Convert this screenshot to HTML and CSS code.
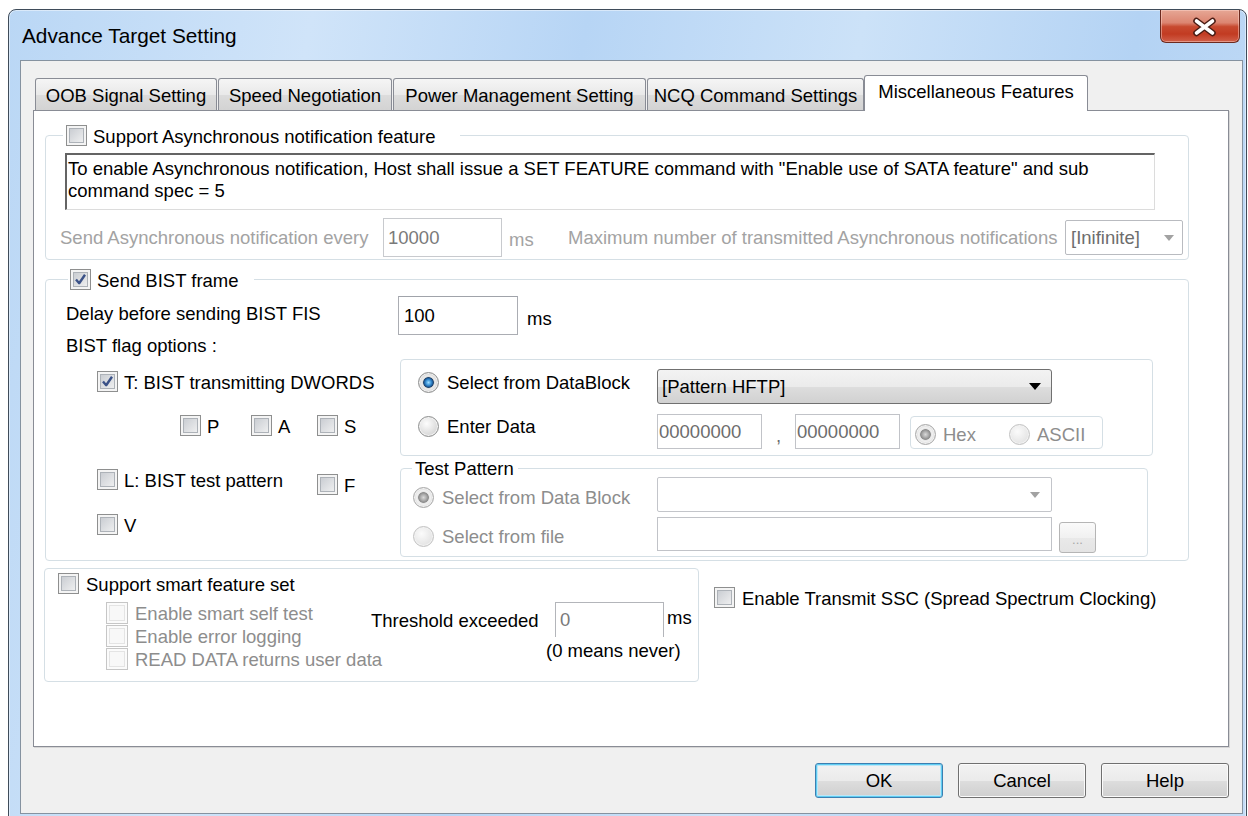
FILE: index.html
```html
<!DOCTYPE html>
<html lang="en">
<head>
<meta charset="utf-8">
<title>Advance Target Setting</title>
<link rel="stylesheet" href="styles.css">
</head>
<body>
<div class="window">
  <div class="titlebar">
    <span class="title">Advance Target Setting</span>
    <button class="close" type="button" aria-label="Close">
      <svg width="80" height="33" viewBox="0 0 80 33">
        <path d="M35.5 11 L51.5 23 M51.5 11 L35.5 23" stroke="#4a1c14" stroke-width="6.5" stroke-linecap="round" fill="none"/>
        <path d="M35.5 11 L51.5 23 M51.5 11 L35.5 23" stroke="#ffffff" stroke-width="3.6" stroke-linecap="round" fill="none"/>
      </svg>
    </button>
  </div>

  <div class="client">
    <div class="tabctl">
      <div class="tabstrip">
        <div class="tab t-oob">OOB Signal Setting</div>
        <div class="tab t-speed">Speed Negotiation</div>
        <div class="tab t-power">Power Management Setting</div>
        <div class="tab t-ncq">NCQ Command Settings</div>
        <div class="tab t-misc active">Miscellaneous Features</div>
      </div>

      <div class="panel">
        <fieldset class="group g-async">
          <legend class="chk"><span class="cb"></span><span>Support Asynchronous notification feature</span></legend>
          <div class="note">To enable Asynchronous notification, Host shall issue a SET FEATURE command with "Enable use of SATA feature" and sub<br>command spec = 5</div>
          <div class="async-row">
            <span class="lbl-every">Send Asynchronous notification every</span>
            <span class="edit e-every">10000</span>
            <span class="unit-every">ms</span>
            <span class="lbl-max">Maximum number of transmitted Asynchronous notifications</span>
            <span class="combo combo-off combo-inf">[Inifinite]<i class="arrow"></i></span>
          </div>
        </fieldset>

        <fieldset class="group g-bist">
          <legend class="chk"><span class="cb"><svg class="tick" viewBox="0 0 19 19"><path d="M5 9.5 L8.2 13.2 L14 4.8"/></svg></span><span>Send BIST frame</span></legend>
          <div class="delay-row">
            <span class="lbl-delay">Delay before sending BIST FIS</span>
            <span class="edit e-delay">100</span>
            <span class="unit-delay">ms</span>
          </div>
          <div class="flag-title">BIST flag options :</div>

          <div class="flags">
            <div class="flag-left">
              <div class="chk row-t"><span class="cb"><svg class="tick" viewBox="0 0 19 19"><path d="M5 9.5 L8.2 13.2 L14 4.8"/></svg></span><span>T: BIST transmitting DWORDS</span></div>
              <div class="row-pas">
                <div class="chk pas-p"><span class="cb"></span><span>P</span></div>
                <div class="chk pas-a"><span class="cb"></span><span>A</span></div>
                <div class="chk"><span class="cb"></span><span>S</span></div>
              </div>
              <div class="row-lf">
                <div class="chk lf-l"><span class="cb"></span><span>L: BIST test pattern</span></div>
                <div class="chk lf-f"><span class="cb"></span><span>F</span></div>
              </div>
              <div class="chk row-v"><span class="cb"></span><span>V</span></div>
            </div>

            <div class="flag-right">
              <div class="datablk">
                <div class="db-row">
                  <div class="opt opt-db db1"><span class="rb on"></span><span>Select from DataBlock</span></div>
                  <span class="combo combo-pat">[Pattern HFTP]<i class="arrow"></i></span>
                </div>
                <div class="db-row">
                  <div class="opt opt-db db2"><span class="rb"></span><span>Enter Data</span></div>
                  <span class="edit e-hex">00000000</span>
                  <span class="comma">,</span>
                  <span class="edit e-hex">00000000</span>
                  <div class="hexgrp">
                    <div class="opt opt-hex off"><span class="rb off on"></span><span>Hex</span></div>
                    <div class="opt off"><span class="rb off"></span><span>ASCII</span></div>
                  </div>
                </div>
              </div>

              <fieldset class="group g-test">
                <legend>Test Pattern</legend>
                <div class="tp-row tp-row1">
                  <div class="opt opt-tp off"><span class="rb off on"></span><span>Select from Data Block</span></div>
                  <span class="combo combo-off combo-tp"><i class="arrow"></i></span>
                </div>
                <div class="tp-row tp-row2">
                  <div class="opt opt-tp off"><span class="rb off"></span><span>Select from file</span></div>
                  <span class="edit e-file"></span>
                  <span class="browse">...</span>
                </div>
              </fieldset>
            </div>
          </div>
        </fieldset>

        <div class="bottom">
          <div class="smart">
            <div class="chk smart-head"><span class="cb"></span><span>Support smart feature set</span></div>
            <div class="smart-body">
              <div class="smart-list">
                <div class="sub"><span class="cb off"></span><span>Enable smart self test</span></div>
                <div class="sub"><span class="cb off"></span><span>Enable error logging</span></div>
                <div class="sub"><span class="cb off"></span><span>READ DATA returns user data</span></div>
              </div>
              <div class="thr">
                <div class="thr-row">
                  <span class="thr-lbl">Threshold exceeded</span>
                  <span class="edit e-thr">0</span>
                  <span class="thr-unit">ms</span>
                </div>
                <div class="thr-note">(0 means never)</div>
              </div>
            </div>
          </div>
          <div class="chk ssc"><span class="cb"></span><span>Enable Transmit SSC (Spread Spectrum Clocking)</span></div>
        </div>
      </div>
    </div>

    <div class="buttons">
      <button class="btn btn-ok" type="button">OK</button>
      <button class="btn" type="button">Cancel</button>
      <button class="btn" type="button">Help</button>
    </div>
  </div>
</div>
</body>
</html>
```

FILE: styles.css
```css
* { box-sizing: border-box; }

html, body { margin: 0; padding: 0; }

body {
  width: 1248px;
  height: 816px;
  overflow: hidden;
  background: #ffffff;
  font-family: "Liberation Sans", Arial, sans-serif;
  font-size: 18.5px;
  color: #000;
}

/* ---------- window frame ---------- */
.window {
  margin: 9px 0 0 8px;
  width: 1239px;
  height: 820px;
  border: 1px solid #3f4c5a;
  border-radius: 8px 8px 0 0;
  padding: 0 3px 0 11px;
  background: linear-gradient(100deg, #bad7f5 0%, #d0e4f9 22%, #b7d5f5 42%, #cce2f8 62%, #b4d3f4 82%, #c4dcf6 100%);
  box-shadow: inset 0 0 0 1px rgba(255, 255, 255, 0.45);
}

.titlebar {
  height: 50px;
  display: flex;
  align-items: flex-start;
}

.title {
  margin: 14px 0 0 2px;
  font-size: 20.8px;
  line-height: 24px;
  color: #000;
}

.close {
  margin-left: auto;
  margin-right: 3px;
  width: 80px;
  height: 33px;
  padding: 0;
  border: 1px solid #6c2a1f;
  border-top: none;
  border-radius: 0 0 6px 6px;
  background: linear-gradient(#e6a795 0%, #dc8571 40%, #c84a30 52%, #c23b22 75%, #d1604a 100%);
  box-shadow: inset 0 0 0 1px rgba(255, 220, 210, 0.45);
  display: block;
}

.close svg { display: block; }

.client {
  width: 1223px;
  height: 754px;
  border: 1px solid #8592a0;
  background: #f0f0f0;
}

/* ---------- tab control ---------- */
.tabctl { margin: 14px 13px 0 12px; }

.tabstrip {
  display: flex;
  align-items: flex-end;
  height: 35px;
  padding-left: 2px;
}

.tab {
  height: 32px;
  padding-top: 2px;
  border: 1px solid #898c95;
  border-bottom: none;
  border-radius: 3px 3px 0 0;
  background: linear-gradient(#f5f5f5, #e9e9e9 50%, #dcdcdc 52%, #d3d3d3);
  display: flex;
  align-items: center;
  justify-content: center;
  white-space: nowrap;
}

.t-oob { width: 182px; }
.t-speed { width: 174px; margin-left: 1px; }
.t-power { width: 253px; margin-left: 1px; }
.t-ncq { width: 217px; margin-left: 1px; }

.tab.active {
  width: 224px;
  height: 36px;
  margin-bottom: -1px;
  padding: 0 0 4px;
  background: #ffffff;
  position: relative;
  z-index: 1;
}

.panel {
  height: 637px;
  border: 1px solid #898c95;
  background: #ffffff;
  box-shadow: 1px 1px 0 #d6d6d6;
}

/* ---------- shared controls ---------- */
.group {
  margin: 0;
  padding: 0;
  min-width: 0;
  border: 1px solid #d5dfe5;
  border-radius: 4px;
}

.chk {
  display: flex;
  align-items: center;
  gap: 6px;
  height: 21px;
  white-space: nowrap;
}

.chk > span + span,
.sub > span + span { padding-top: 3px; }

.cb {
  flex: none;
  width: 21px;
  height: 21px;
  border: 1px solid #8e8f8f;
  background: linear-gradient(135deg, #c2c6cc, #f6f6f6);
  box-shadow: inset 0 0 0 2px #f4f4f4, inset 0 0 0 3px #adb2b8;
}

.cb .tick { display: block; width: 19px; height: 19px; }
.cb .tick path { fill: none; stroke: #3b5288; stroke-width: 2.4; stroke-linejoin: round; }

.cb.off {
  width: 22px;
  height: 22px;
  border-color: #c6c6c6;
  background: #f8f8f8;
  box-shadow: inset 0 0 0 2px #fbfbfb, inset 0 0 0 3px #e4e4e4;
}

.rb {
  flex: none;
  width: 21px;
  height: 21px;
  border-radius: 50%;
  border: 1px solid #8e8f8f;
  background: radial-gradient(circle at 40% 35%, #fdfdfd, #d8d8d8 70%, #c6c6c6);
  box-shadow: inset 0 0 0 1px #f2f2f2;
}

.rb.on {
  background: radial-gradient(circle closest-side, #9fdcff 0%, #3b93d6 28%, #1c5896 46%, #173d66 52%, #d6d6d6 60%, #ededed 70%, #cccccc 100%);
}

.rb.off {
  border-color: #c2c2c2;
  background: radial-gradient(circle at 40% 35%, #fbfbfb, #e3e3e3 75%, #dadada);
}

.rb.off.on {
  border-color: #a9a9a9;
  background: radial-gradient(circle closest-side, #dadada 0%, #acacac 32%, #8e8e8e 50%, #8a8a8a 52%, #e4e4e4 60%, #f2f2f2 72%, #d6d6d6 100%);
}

.opt {
  display: flex;
  align-items: center;
  gap: 8px;
  white-space: nowrap;
}

.opt > span + span { padding-top: 1px; }

.opt.off { color: #8d8d8d; }

.edit {
  flex: none;
  height: 39px;
  border: 1px solid #abadb3;
  border-top-color: #a0a3aa;
  background: #ffffff;
  display: flex;
  align-items: center;
  white-space: nowrap;
}

.combo {
  flex: none;
  display: flex;
  align-items: center;
  padding-left: 4px;
  border: 1px solid #707070;
  border-radius: 3px;
  background: linear-gradient(#f3f3f3, #ebebeb 50%, #dddddd 52%, #d1d1d1);
  white-space: nowrap;
}

.combo-off {
  border-color: #c3c5ca;
  border-radius: 2px;
  background: #ffffff;
  color: #6d6d6d;
}

.arrow {
  margin-left: auto;
  margin-right: 10px;
  width: 0;
  height: 0;
  border-left: 6px solid transparent;
  border-right: 6px solid transparent;
  border-top: 7px solid #000;
}

.combo-off .arrow {
  border-top-color: #a2a2a2;
  border-left-width: 5px;
  border-right-width: 5px;
  border-top-width: 6px;
}

/* ---------- asynchronous notification group ---------- */
.g-async {
  margin: 13px 0 0 11px;
  width: 1144px;
  padding-bottom: 2px;
}

.g-async > legend {
  margin-left: 17px;
  padding: 0 25px 0 3px;
  height: 22px;
}

.note {
  margin: 7px 0 0 19px;
  width: 1090px;
  height: 57px;
  padding: 3px 0 0 1px;
  background: #ffffff;
  border: 1px solid #dcdcdc;
  border-top: 2px solid #646464;
  border-left: 2px solid #646464;
  line-height: 22px;
  white-space: nowrap;
}

.async-row {
  display: flex;
  align-items: center;
  height: 39px;
  margin-top: 8px;
  padding-left: 14px;
  color: #a3a3a3;
  white-space: nowrap;
}

.lbl-every { width: 323px; }

.e-every {
  width: 119px;
  padding-left: 4px;
  border-color: #c8cace;
  color: #7a7a7a;
}

.unit-every { width: 66px; padding-left: 7px; margin-top: 5px; }
.lbl-max { width: 497px; }

.combo-inf {
  width: 118px;
  height: 35px;
  padding-left: 5px;
  border-color: #b9bbc0;
}

.combo-inf .arrow { margin-right: 8px; }

/* ---------- BIST group ---------- */
.g-bist {
  margin: 8px 0 0 11px;
  width: 1144px;
  padding-bottom: 3px;
}

.g-bist > legend {
  margin-left: 22px;
  padding: 0 15px 0 2px;
  height: 22px;
}

.delay-row {
  display: flex;
  align-items: center;
  height: 39px;
  margin-top: 6px;
  padding-left: 20px;
  white-space: nowrap;
}

.lbl-delay { width: 332px; margin-top: -4px; }
.e-delay { width: 120px; padding-left: 5px; }
.unit-delay { margin: 7px 0 0 9px; }

.flag-title {
  padding-left: 20px;
  line-height: 22px;
}

.flags {
  display: grid;
  grid-template-columns: 354px 753px;
}

.flag-left { padding-left: 51px; }

.row-t { margin-top: 14px; }

.row-pas {
  display: flex;
  margin-top: 23px;
  padding-left: 83px;
}

.pas-p { width: 71px; }
.pas-a { width: 66px; }

.row-lf {
  display: flex;
  align-items: flex-start;
  margin-top: 33px;
}

.lf-l { width: 220px; }
.lf-f { margin-top: 5px; }
.row-v { margin-top: 19px; }

.datablk {
  margin-top: 2px;
  width: 753px;
  border: 1px solid #d5dfe5;
  border-radius: 4px;
  padding: 9px 0 6px 17px;
}

.db-row {
  display: flex;
  align-items: center;
  height: 35px;
}

.db-row + .db-row { margin-top: 10px; }

.opt-db { width: 239px; align-self: flex-start; }
.db1 { margin-top: 2px; }
.db2 { margin-top: 1px; }

.combo-pat { width: 395px; height: 35px; }

.e-hex {
  width: 105px;
  height: 35px;
  padding-left: 1px;
  color: #6d6d6d;
  border-color: #c1c3c8;
}

.comma {
  width: 33px;
  text-align: center;
  margin-top: 8px;
  color: #6d6d6d;
}

.hexgrp {
  align-self: flex-end;
  margin-left: 10px;
  width: 193px;
  height: 33px;
  border: 1px solid #d5dfe5;
  border-radius: 4px;
  display: flex;
  align-items: center;
  padding: 3px 0 0 4px;
}

.opt-hex { width: 94px; }
.hexgrp .opt { gap: 7px; }

.g-test {
  margin-top: 2px;
  width: 748px;
  padding-bottom: 5px;
}

.g-test > legend {
  margin-left: 11px;
  padding: 0 4px 0 3px;
  height: 20px;
  line-height: 22px;
}

.tp-row {
  display: flex;
  align-items: center;
  padding-left: 12px;
}

.tp-row1 { margin-top: -1px; height: 35px; }
.tp-row2 { margin-top: 5px; height: 34px; }

.opt-tp { width: 244px; padding-top: 5px; }
.tp-row2 .opt-tp { padding-top: 4px; }

.combo-tp { width: 395px; height: 35px; }
.combo-tp .arrow { margin-right: 11px; }

.e-file {
  width: 395px;
  height: 34px;
  border-color: #c1c3c8;
}

.browse {
  align-self: flex-start;
  margin: 5px 0 0 7px;
  width: 37px;
  height: 31px;
  border: 1px solid #b5b5b5;
  border-radius: 3px;
  background: linear-gradient(#fafafa, #f1f1f1 50%, #e9e9e9 52%, #e4e4e4);
  color: #a8a8a8;
  font-size: 13px;
  text-align: center;
  line-height: 34px;
}

/* ---------- smart feature group ---------- */
.bottom {
  display: flex;
  align-items: flex-start;
  margin-top: 7px;
}

.smart {
  margin-left: 10px;
  width: 655px;
  height: 114px;
  border: 1px solid #d5dfe5;
  border-radius: 4px;
  padding: 4px 0 0 13px;
}

.smart-head { gap: 7px; }

.smart-body {
  display: flex;
  margin-top: 6px;
}

.smart-list {
  margin: 1px 0 0 48px;
  width: 265px;
}

.sub {
  display: flex;
  align-items: center;
  gap: 7px;
  height: 23px;
  color: #8d8d8d;
  white-space: nowrap;
}

.thr { margin-top: 2px; }

.thr-row {
  display: flex;
  align-items: center;
  height: 35px;
  white-space: nowrap;
}

.thr-lbl { width: 184px; padding-top: 3px; }

.e-thr {
  width: 109px;
  height: 35px;
  padding-left: 4px;
  border-color: #b3b5ba;
  border-bottom: none;
  color: #7a7a7a;
}

.thr-unit { margin: -3px 0 0 3px; }

.thr-note {
  margin: 3px 0 0 175px;
  line-height: 22px;
  white-space: nowrap;
}

.ssc {
  margin: 19px 0 0 15px;
  gap: 7px;
}

/* ---------- dialog buttons ---------- */
.buttons {
  display: flex;
  justify-content: flex-end;
  gap: 15px;
  margin-top: 16px;
  padding-right: 13px;
}

.btn {
  width: 128px;
  height: 35px;
  padding: 0;
  border: 1px solid #707070;
  border-radius: 3px;
  background: linear-gradient(#f2f2f2, #ebebeb 50%, #dddddd 52%, #cfcfcf);
  box-shadow: inset 0 0 0 1px #fbfbfb;
  font: inherit;
  color: #000;
}

.btn-ok {
  border-color: #3c7fb1;
  box-shadow: inset 0 0 0 1px #5fcdf2, inset 0 0 0 2px #bde6f7;
}
```
